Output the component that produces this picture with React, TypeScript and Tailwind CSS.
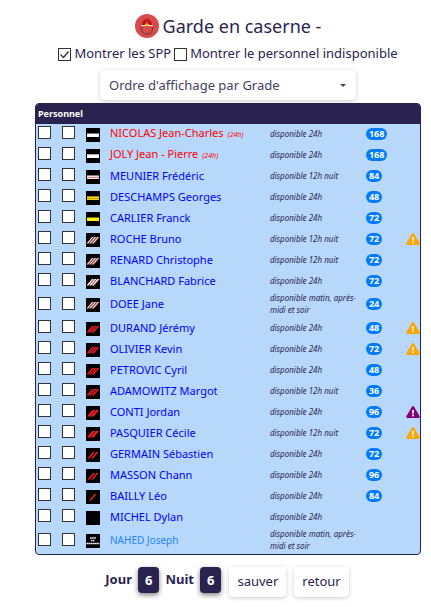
import { useState } from 'react';

type Rank =
  | 'silver'
  | 'silverThick'
  | 'adjudant'
  | 'gold'
  | 'goldBright'
  | 'sergentChef'
  | 'sergent'
  | 'caporalChef'
  | 'caporalThick'
  | 'caporal'
  | 'premiere'
  | 'sapeur'
  | 'other';

interface Person {
  name: string;
  rank: Rank;
  availability: string;
  hours?: number;
  color?: 'red' | 'light';
  full?: boolean;
  warning?: 'orange' | 'purple';
}

const DAY = 'disponible 24h';
const NIGHT = 'disponible 12h nuit';
const SPLIT = 'disponible matin, après-midi et soir';

const people: Person[] = [
  { name: 'NICOLAS Jean-Charles', rank: 'silver', availability: DAY, hours: 168, color: 'red', full: true },
  { name: 'JOLY Jean - Pierre', rank: 'silverThick', availability: DAY, hours: 168, color: 'red', full: true },
  { name: 'MEUNIER Frédéric', rank: 'adjudant', availability: NIGHT, hours: 84 },
  { name: 'DESCHAMPS Georges', rank: 'gold', availability: DAY, hours: 48 },
  { name: 'CARLIER Franck', rank: 'goldBright', availability: DAY, hours: 72 },
  { name: 'ROCHE Bruno', rank: 'sergentChef', availability: NIGHT, hours: 72, warning: 'orange' },
  { name: 'RENARD Christophe', rank: 'sergentChef', availability: NIGHT, hours: 72 },
  { name: 'BLANCHARD Fabrice', rank: 'sergent', availability: DAY, hours: 72 },
  { name: 'DOEE Jane', rank: 'sergentChef', availability: SPLIT, hours: 24 },
  { name: 'DURAND Jérémy', rank: 'caporalChef', availability: DAY, hours: 48, warning: 'orange' },
  { name: 'OLIVIER Kevin', rank: 'caporalChef', availability: DAY, hours: 72, warning: 'orange' },
  { name: 'PETROVIC Cyril', rank: 'caporalChef', availability: DAY, hours: 48 },
  { name: 'ADAMOWITZ Margot', rank: 'caporalChef', availability: NIGHT, hours: 36 },
  { name: 'CONTI Jordan', rank: 'caporalThick', availability: DAY, hours: 96, warning: 'purple' },
  { name: 'PASQUIER Cécile', rank: 'caporalThick', availability: NIGHT, hours: 72, warning: 'orange' },
  { name: 'GERMAIN Sébastien', rank: 'caporal', availability: DAY, hours: 72 },
  { name: 'MASSON Chann', rank: 'caporal', availability: DAY, hours: 96 },
  { name: 'BAILLY Léo', rank: 'premiere', availability: DAY, hours: 84 },
  { name: 'MICHEL Dylan', rank: 'sapeur', availability: DAY },
  { name: 'NAHED Joseph', rank: 'other', availability: SPLIT, color: 'light' },
];

const nameColors = {
  red: 'text-[#ff0000]',
  light: 'text-[#1e86f5]',
  blue: 'text-[#0000ff]',
};

function HelmetLogo() {
  return (
    <svg viewBox="0 0 24 24" className="size-6 shrink-0" aria-hidden="true">
      <circle cx="12" cy="12" r="12" fill="#d94b4b" />
      <path d="M6.500 14c0 4 2 6 5.500 6s5.500-2 5.500-6" fill="none" stroke="#4b3a3d" strokeWidth="1" />
      <path d="M7 11.500C7 7.500 8.800 5 12 5s5 2.500 5 6.500z" fill="#b8161b" />
      <path d="M11 4h2v6h-2z" fill="#cf262a" />
      <path d="M5.500 11.500h13l.5 2.500c-4-1.300-10-1.300-14 0z" fill="#c21d20" />
      <path d="M6 12q6-1.200 12 0" fill="none" stroke="#fff" strokeWidth="1.200" />
      <path d="M12 9l2 1.500-1 2h-2l-1-2z" fill="#ffb01f" />
    </svg>
  );
}

interface StripesProps {
  starts: number[];
  color: string;
  width?: number;
  edge?: string;
}

function Stripes({ starts, color, width = 2, edge }: StripesProps) {
  return (
    <>
      {starts.map((x) => (
        <g key={x}>
          <path d={`M${x} 10.500L${x + 5.5} 4h${width}L${x + width} 10.500z`} fill={color} />
          {edge && (
            <path
              d={`M${x + width + 0.3} 10.500L${x + width + 5.8} 4`}
              fill="none"
              stroke={edge}
              strokeWidth="0.800"
            />
          )}
        </g>
      ))}
    </>
  );
}

function RankIcon({ rank }: { rank: Rank }) {
  return (
    <svg viewBox="0 0 14 14" className="block size-3.5" aria-hidden="true">
      <rect width="14" height="14" fill="#000" />
      {rank === 'silver' && (
        <>
          <rect x="1" y="5" width="12" height="1" fill="#777" />
          <rect x="1" y="6" width="12" height="3" fill="#fff" />
        </>
      )}
      {rank === 'silverThick' && (
        <>
          <rect x="1" y="5" width="12" height="1" fill="#aaa" />
          <rect x="1" y="6" width="12" height="3" fill="#fff" />
        </>
      )}
      {rank === 'adjudant' && (
        <>
          <rect x="1" y="5" width="12" height="1" fill="#8d7f7f" />
          <rect x="1" y="6" width="12" height="3" fill="#fbe9e9" />
          <rect x="1" y="7" width="12" height="1" fill="#ee7f83" />
        </>
      )}
      {rank === 'gold' && (
        <>
          <rect x="1" y="5" width="12" height="1" fill="#a8860c" />
          <rect x="1" y="6" width="12" height="3" fill="#ffd800" />
          <rect x="1" y="7" width="12" height="1" fill="#c99a08" />
        </>
      )}
      {rank === 'goldBright' && (
        <>
          <rect x="1" y="5" width="12" height="1" fill="#777308" />
          <rect x="1" y="6" width="12" height="3" fill="#fff200" />
        </>
      )}
      {rank === 'sergentChef' && <Stripes starts={[0.5, 3.2, 5.9]} width={1.7} color="#f5e6e3" edge="#c0393d" />}
      {rank === 'sergent' && <Stripes starts={[0.5, 3.2, 5.9]} color="#ffffff" edge="#c2262b" />}
      {rank === 'caporalChef' && <Stripes starts={[0.5, 3.2, 5.9]} color="#ee1c24" />}
      {rank === 'caporalThick' && <Stripes starts={[1, 4.5]} width={3} color="#f01c24" />}
      {rank === 'caporal' && <Stripes starts={[1.5, 5]} color="#f01c24" />}
      {rank === 'premiere' && <Stripes starts={[3]} color="#f01c24" />}
      {rank === 'other' && (
        <g stroke="#eee" fill="none">
          <path d="M4 4h6" strokeWidth="1.500" strokeDasharray="1.700 0.400" />
          <path d="M5 6.500h4" strokeWidth="1.500" strokeDasharray="1.500 0.500" />
          <path d="M0.500 9.500h13" strokeWidth="1.500" strokeDasharray="1.800 0.300" />
        </g>
      )}
    </svg>
  );
}

function Warning({ color }: { color: 'orange' | 'purple' }) {
  return (
    <svg
      viewBox="0 0 576 512"
      role="img"
      aria-label="Attention"
      className={`block h-3 w-3.5 ${color === 'orange' ? 'fill-[#ffa500]' : 'fill-[#800080]'}`}
    >
      <path d="M569.500 440C588 472 564.800 512 527.900 512H48.100c-36.900 0-60-40.100-41.600-72L246.400 24c18.500-32 64.700-32 83.200 0z" />
      <path d="M245 170h86l-11 160h-64z" className="fill-[#fff2e0]" />
      <circle cx="288" cy="400" r="44" className="fill-[#fff2e0]" />
    </svg>
  );
}

function CheckBox({ label, id, defaultChecked }: { label?: string; id: string; defaultChecked?: boolean }) {
  return (
    <span className="relative block size-[13px] shrink-0">
      <input
        id={id}
        type="checkbox"
        aria-label={label}
        defaultChecked={defaultChecked}
        className="peer block size-[13px] appearance-none border border-[#333] bg-white"
      />
      <svg
        viewBox="0 0 13 13"
        className="pointer-events-none absolute inset-0 hidden size-[13px] peer-checked:block"
        aria-hidden="true"
      >
        <path d="M2.500 6.500l3 3 5-6" fill="none" stroke="#333" strokeWidth="1.300" />
      </svg>
    </span>
  );
}

function Count({ value }: { value: number }) {
  return (
    <span className="rounded bg-[#2b234f] px-[7px] py-1 text-[13px] leading-[18px] text-white shadow-[0_2px_5px_rgba(0,0,0,0.5)]">
      {value}
    </span>
  );
}

export default function App() {
  const [order, setOrder] = useState('grade');

  return (
    <main className="bg-white pt-3 pr-2.5 pb-2 pl-[35px] font-['Noto_Sans',sans-serif] text-[#2b234f]">
      {/* Title */}
      <h1 className="flex h-7 items-center justify-center gap-1 text-lg">
        <HelmetLogo />
        Garde en caserne -
      </h1>

      {/* Filters */}
      <div className="flex h-7 items-center justify-center gap-[3px] text-[13px]">
        <div className="flex items-center gap-[3px]">
          <CheckBox id="spp" defaultChecked />
          <label htmlFor="spp">Montrer les SPP</label>
        </div>
        <div className="flex items-center gap-[3px]">
          <CheckBox id="indispo" />
          <label htmlFor="indispo">Montrer le personnel indisponible</label>
        </div>
      </div>

      <div className="relative mx-auto mt-0.5 w-64 max-w-full">
        <select
          aria-label="Ordre d'affichage"
          value={order}
          onChange={(e) => setOrder(e.target.value)}
          className="block h-[30px] w-full appearance-none rounded bg-white px-[9px] pt-0.5 text-[13px] text-[#443f5c] shadow-[0_1px_4px_rgba(0,0,0,0.2)]"
        >
          <option value="grade">Ordre d'affichage par Grade</option>
          <option value="nom">Ordre d'affichage par Nom</option>
        </select>
        <span className="pointer-events-none absolute top-[14px] right-2.5 border-x-[3px] border-t-[3px] border-x-transparent border-t-[#443f5c]" />
      </div>

      {/* Personnel */}
      <div className="mx-auto mt-[3px] w-full overflow-hidden rounded border border-[#2b234f] bg-[#b7d8fb]">
        <table className="w-full table-fixed border-collapse">
          <colgroup>
            <col className="w-6" />
            <col className="w-6" />
            <col className="w-6" />
            <col />
            <col className="w-24" />
            <col className="w-10" />
            <col className="w-3.5" />
          </colgroup>
          <thead>
            <tr className="h-5 bg-[#2b234f]">
              <th colSpan={7} className="pl-0.5 text-left text-[9px] leading-5 font-bold text-white">
                Personnel
              </th>
            </tr>
          </thead>
          <tbody>
            {people.map((p) => (
              <tr key={p.name} className={p.availability === SPLIT ? 'h-[26px]' : 'h-[21px]'}>
                <td className="pb-1 pl-0.5">
                  <CheckBox id={`jour-${p.name}`} label={`Jour ${p.name}`} />
                </td>
                <td className="pb-1 pl-0.5">
                  <CheckBox id={`nuit-${p.name}`} label={`Nuit ${p.name}`} />
                </td>
                <td className="pl-0.5">
                  <RankIcon rank={p.rank} />
                </td>
                <td className="pb-0.5 pl-0.5 text-[11px] leading-4 whitespace-nowrap">
                  <a
                    href="#"
                    className={`${nameColors[p.color ?? 'blue']} ${p.color === 'light' ? 'text-[10px]' : ''}`}
                  >
                    {p.name}
                    {p.full && <i className="ml-1 text-[7px]">(24h)</i>}
                  </a>
                </td>
                <td className="pb-0.5 text-[8px] leading-3 italic">{p.availability}</td>
                <td className="pb-0.5">
                  {p.hours && (
                    <span className="block w-fit rounded-full bg-[#007bff] px-[3px] text-[9px] leading-3 font-bold text-white">
                      {p.hours}
                    </span>
                  )}
                </td>
                <td className="pb-0.5">{p.warning && <Warning color={p.warning} />}</td>
              </tr>
            ))}
          </tbody>
        </table>
      </div>

      {/* Totals and actions */}
      <div className="mt-3 flex items-start justify-center pr-0.5 text-[13px]">
        <div className="flex items-center gap-1.5 font-bold">
          Jour <Count value={6} />
          Nuit <Count value={6} />
        </div>
        <button className="ml-2 h-[30px] rounded bg-white px-2 shadow-[0_1px_4px_rgba(0,0,0,0.2)]">sauver</button>
        <button className="ml-2 h-[30px] rounded bg-white px-2 shadow-[0_1px_4px_rgba(0,0,0,0.2)]">retour</button>
      </div>
    </main>
  );
}
